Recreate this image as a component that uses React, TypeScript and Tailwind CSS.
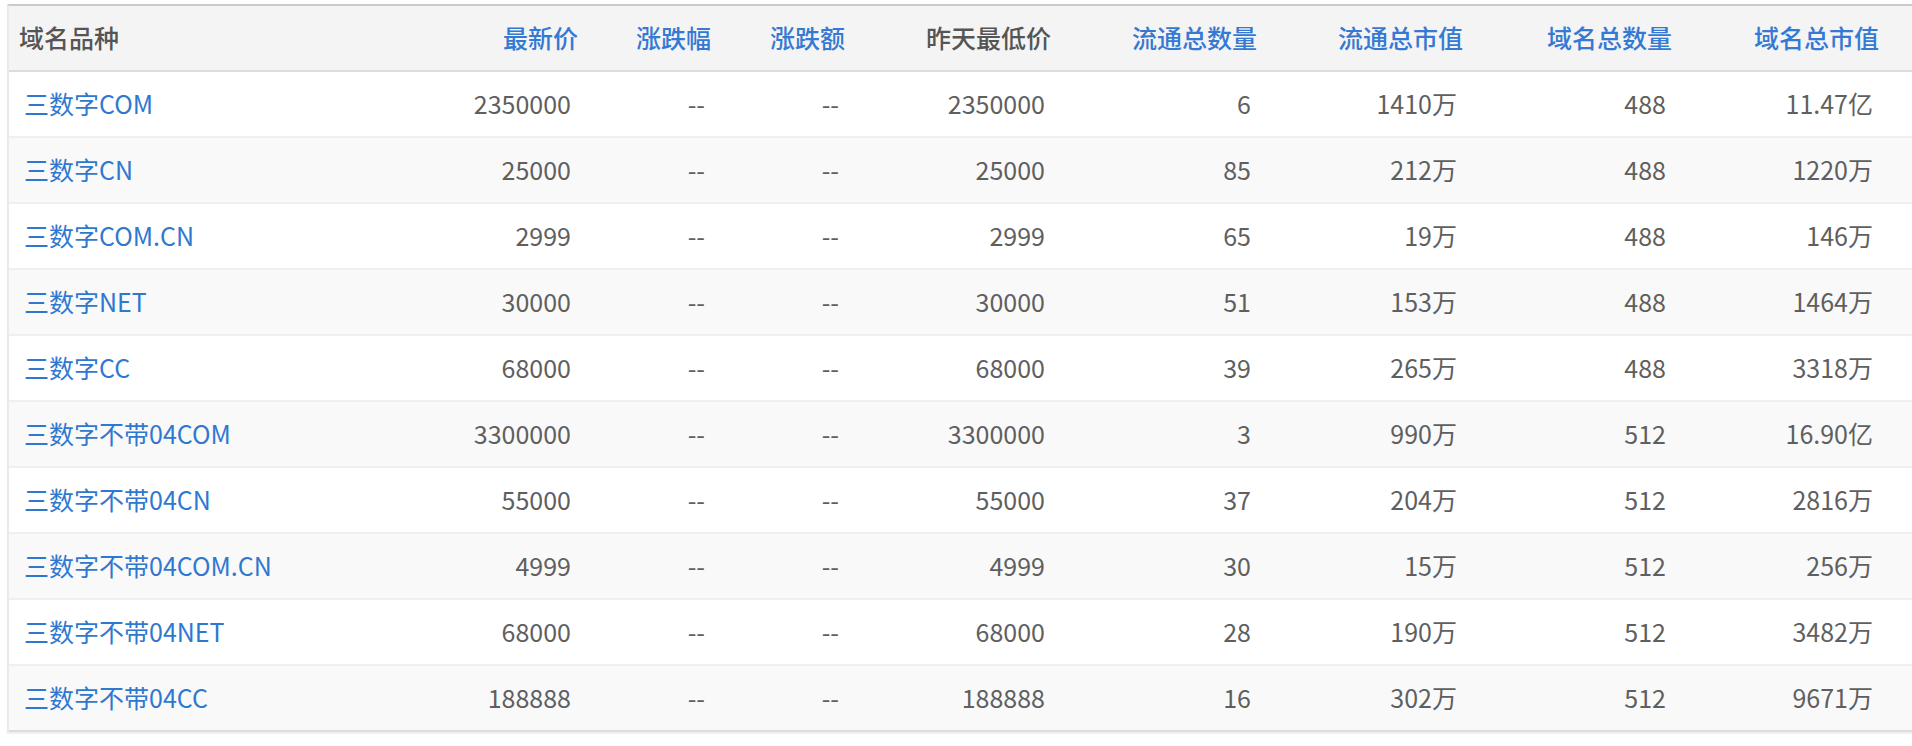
import React from "react";

type Row = {
  name: string;
  price: string;
  pct: string;
  amt: string;
  low: string;
  circ: string;
  circVal: string;
  total: string;
  totalVal: string;
};

const rows: Row[] = [
  { name: "三数字COM", price: "2350000", pct: "--", amt: "--", low: "2350000", circ: "6", circVal: "1410万", total: "488", totalVal: "11.47亿" },
  { name: "三数字CN", price: "25000", pct: "--", amt: "--", low: "25000", circ: "85", circVal: "212万", total: "488", totalVal: "1220万" },
  { name: "三数字COM.CN", price: "2999", pct: "--", amt: "--", low: "2999", circ: "65", circVal: "19万", total: "488", totalVal: "146万" },
  { name: "三数字NET", price: "30000", pct: "--", amt: "--", low: "30000", circ: "51", circVal: "153万", total: "488", totalVal: "1464万" },
  { name: "三数字CC", price: "68000", pct: "--", amt: "--", low: "68000", circ: "39", circVal: "265万", total: "488", totalVal: "3318万" },
  { name: "三数字不带04COM", price: "3300000", pct: "--", amt: "--", low: "3300000", circ: "3", circVal: "990万", total: "512", totalVal: "16.90亿" },
  { name: "三数字不带04CN", price: "55000", pct: "--", amt: "--", low: "55000", circ: "37", circVal: "204万", total: "512", totalVal: "2816万" },
  { name: "三数字不带04COM.CN", price: "4999", pct: "--", amt: "--", low: "4999", circ: "30", circVal: "15万", total: "512", totalVal: "256万" },
  { name: "三数字不带04NET", price: "68000", pct: "--", amt: "--", low: "68000", circ: "28", circVal: "190万", total: "512", totalVal: "3482万" },
  { name: "三数字不带04CC", price: "188888", pct: "--", amt: "--", low: "188888", circ: "16", circVal: "302万", total: "512", totalVal: "9671万" },
];

const headers: { label: string; blue: boolean }[] = [
  { label: "最新价", blue: true },
  { label: "涨跌幅", blue: true },
  { label: "涨跌额", blue: true },
  { label: "昨天最低价", blue: false },
  { label: "流通总数量", blue: true },
  { label: "流通总市值", blue: true },
  { label: "域名总数量", blue: true },
  { label: "域名总市值", blue: true },
];

const grid =
  "grid grid-cols-[446px_133px_133px_134px_206px_206px_206px_209px_1fr] items-center";

export default function App() {
  return (
    <div
      className="w-[1912px] h-[746px] bg-white pt-[4px] pl-[7px] overflow-hidden"
      style={{ fontFamily: '"Noto Sans CJK SC", "Noto Sans", sans-serif' }}
    >
      <div className="border-l-2 border-t-2 border-l-[#eaeaea] border-t-[#cbcbcb] shadow-[0_2px_1px_rgba(0,0,0,0.06)]">
        <div className={`${grid} h-[66px] bg-[#f4f4f4] border-b-2 border-[#dcdcdc] text-[25px] font-medium`}>
          <div className="pl-[10px] text-[#555555]">域名品种</div>
          {headers.map((h, i) => (
            <div
              key={h.label}
              className={`text-right ${i === headers.length - 1 ? "pr-[33px]" : "pr-[10px]"} ${
                h.blue ? "text-[#3479d3]" : "text-[#555555]"
              }`}
            >
              {h.label}
            </div>
          ))}
        </div>
        {rows.map((r, idx) => {
          const vals = [r.price, r.pct, r.amt, r.low, r.circ, r.circVal, r.total, r.totalVal];
          const last = idx === rows.length - 1;
          return (
            <div
              key={r.name}
              className={`${grid} h-[66px] border-b-2 text-[25px] ${
                idx % 2 === 0 ? "bg-white" : "bg-[#f9f9f9]"
              } ${last ? "border-[#dcdcdc]" : "border-[#efefef]"}`}
            >
              <div className="pl-[15px] text-[#2f78d0]">{r.name}</div>
              {vals.map((v, i) => (
                <div
                  key={i}
                  className={`text-right text-[#5f5f5f] ${
                    i === vals.length - 1 ? "pr-[39px]" : i === 0 ? "pr-[17px]" : "pr-[16px]"
                  }`}
                >
                  {v}
                </div>
              ))}
            </div>
          );
        })}
      </div>
    </div>
  );
}
